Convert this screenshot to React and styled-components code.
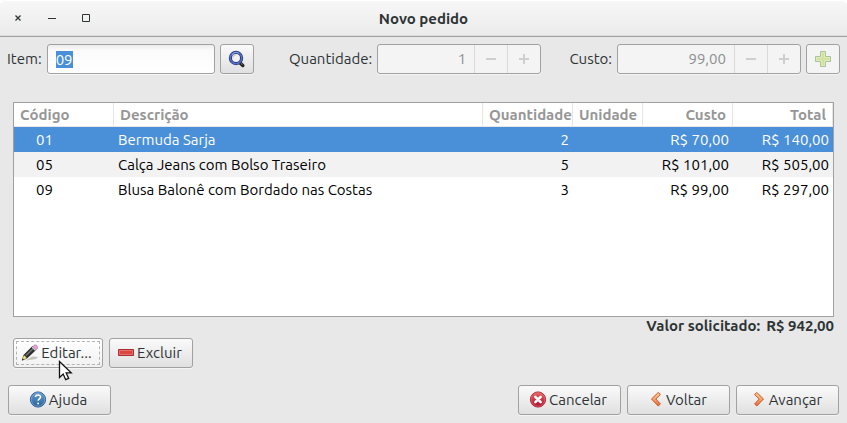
import React, { useEffect, useRef, useState } from "react";
import styled, { createGlobalStyle, css } from "styled-components";

const GlobalStyle = createGlobalStyle`
  * { box-sizing: border-box; }
  body {
    margin: 0;
    background: #fff;
    color: #2e3436;
    font: 15px/20px Ubuntu, "Noto Sans", "Open Sans", sans-serif;
  }
  button, input { font: inherit; color: inherit; }
`;

const Window = styled.main`
  display: flex;
  flex-direction: column;
  min-height: 100vh;
  background: #e8e8e8;
  border-radius: 6px 6px 0 0;
`;

const TitleBar = styled.header`
  display: grid;
  grid-template-columns: 1fr auto 1fr;
  align-items: center;
  height: 37px;
  padding: 0 10px;
  background: linear-gradient(#f7f7f7, #ebebeb);
  border-bottom: 1px solid #a1a1a1;
  box-shadow: inset 0 1px #fff, inset 0 -1px #dcdcdc;
  border-radius: 6px 6px 0 0;
`;

const WindowControls = styled.div`
  display: flex;
  gap: 18px;
`;

const WindowButton = styled.button`
  display: flex;
  width: 16px;
  height: 16px;
  padding: 0;
  border: 0;
  background: none;
`;

const Title = styled.h1`
  margin: 0;
  padding-top: 2px;
  font-size: 15px;
  line-height: 20px;
`;

const EntryBar = styled.form`
  display: flex;
  justify-content: space-between;
  padding: 7px 7px 0;
`;

const Field = styled.div`
  display: flex;
  align-items: center;
  gap: 5px;
  padding-left: ${(p) => (p.$indent ? "7px" : "0")};
`;

const Label = styled.label`
  white-space: nowrap;
`;

const TextInput = styled.input`
  width: 168px;
  height: 30px;
  padding: 0 8px;
  border: 1px solid #a1a1a1;
  border-radius: 3px;
  background: linear-gradient(#ececec, #fafafa 5px, #fff);
  box-shadow: 0 1px #f8f8f8;
  line-height: 17px;
  outline: 0;
  &::selection { background: #4a90d9; color: #fff; }
`;

const buttonFrame = css`
  border: 1px solid #a1a1a1;
  border-radius: 3px;
  box-shadow: 0 1px #f4f4f4;
`;

const Spin = styled.div`
  ${buttonFrame}
  display: flex;
  width: ${(p) => p.$width};
  height: 30px;
  background: #f4f4f4;
  overflow: hidden;
`;

const SpinInput = styled.input`
  flex: 1;
  min-width: 0;
  padding: 0 8px;
  border: 0;
  background: none;
  color: #8c9091;
  text-align: right;
`;

const SpinStep = styled.button`
  display: grid;
  place-items: center;
  width: 33px;
  padding: 0;
  border: 0;
  border-left: 1px solid #dadada;
  background: none;
`;

const Button = styled.button`
  ${buttonFrame}
  display: inline-flex;
  align-items: center;
  justify-content: center;
  width: ${(p) => p.$width};
  height: 30px;
  padding: 0;
  white-space: nowrap;
  background: ${(p) => (p.$hover ? "linear-gradient(#fff, #f1f1f1)" : "linear-gradient(#fafafa, #e0e0e0)")};
  outline: ${(p) => (p.$hover ? "1px dashed #b4b4b4" : "0")};
  outline-offset: -4px;
  &:disabled { background: #f4f4f4; }
  svg { flex: none; }
`;

const LabelledButton = styled(Button)`
  gap: ${(p) => p.$gap || "2px"};
  padding-right: 3px;
`;

const Content = styled.section`
  display: flex;
  flex: 1;
  flex-direction: column;
  padding: 28px 13px 0;
`;

const ListPanel = styled.div`
  flex: 1;
  min-height: 200px;
  background: #fff;
  border: 1px solid #a1a1a1;
`;

const Table = styled.table`
  width: 100%;
  table-layout: fixed;
  border-collapse: separate;
  border-spacing: 0;
`;

const Col = styled.col`
  width: ${(p) => p.$width};
`;

const HeadCell = styled.th`
  height: 24px;
  padding: 0 0 0 6px;
  border-right: 1px solid #e6e6e6;
  border-bottom: 1px solid #e6e6e6;
  color: #969696;
  text-align: left;
  line-height: 20px;
  white-space: nowrap;
  overflow: hidden;
  ${(p) => p.$right && "text-align: right; padding: 0 6px 0 0;"}
`;

const Row = styled.tr`
  background: #fff;
  color: #000;
  &:nth-child(even) { background: #f2f2f2; }
  &[aria-selected="true"] { background: #4a90d9; color: #fff; }
`;

const Cell = styled.td`
  height: 25px;
  padding: 0 4px;
  text-align: ${(p) => p.$align || "left"};
  white-space: nowrap;
`;

const CodeCell = styled(Cell)`
  padding-left: 22px;
`;

const Total = styled.p`
  display: flex;
  justify-content: flex-end;
  gap: 6px;
  margin: 0;
  line-height: 18px;
  font-weight: bold;
`;

const ItemActions = styled.div`
  display: flex;
  gap: 6px;
  margin-top: 3px;
`;

const Pointed = styled.div`
  position: relative;
  display: flex;
`;

const Cursor = styled.svg`
  position: absolute;
  left: 45px;
  top: 22px;
  z-index: 1;
  pointer-events: none;
`;

const Footer = styled.footer`
  display: flex;
  gap: 6px;
  padding: 17px 8px 8px;
`;

const Spacer = styled.span`
  flex: 1;
`;

const SearchIcon = () => (
  <svg width="18" height="18" viewBox="0 0 18 18" aria-hidden="true">
    <path d="M11.5 12.5l3.3 3" stroke="#222" strokeWidth="3.4" strokeLinecap="round" />
    <path d="M13 13.5l1.4 1.2" stroke="#958774" strokeWidth="1" />
    <circle cx="8" cy="8" r="5.6" fill="#f1f2ee" stroke="#28347e" strokeWidth="3.2" />
    <circle cx="8" cy="8" r="5.7" fill="none" stroke="#5773c4" strokeWidth="1.5" />
    <path d="M4 5.2a5 5 0 0 1 6.5-2" fill="none" stroke="#91b9e9" strokeWidth="1" />
    <path d="M5 8a3 3 0 0 1 3-3" fill="none" stroke="#c9cbc9" strokeWidth="1" />
  </svg>
);

const AddIcon = () => (
  <svg width="18" height="18" viewBox="0 0 18 18" aria-hidden="true">
    <path d="M6.5 1.5h5v5h5v5h-5v5h-5v-5h-5v-5h5z" fill="#d2e0a0" stroke="#a9c49b" strokeLinejoin="round" />
    <path d="M7.5 2.5h3v5h5v3h-5v5h-3v-5h-5v-3h5z" fill="none" stroke="#e2ebbc" />
  </svg>
);

const PencilIcon = () => (
  <svg width="18" height="18" viewBox="0 0 18 18" aria-hidden="true">
    <path d="M5 16.5l6-4 6 .5-2 2z" fill="#c2c2c0" />
    <path d="M1.5 16l1-5L11.5 2l3.8 3.8L6 14.5z" fill="#2b2d2d" />
    <path d="M5 11.5L13 3.8" stroke="#777" strokeWidth="1.4" />
    <path d="M1.2 16.2l1.3-4.7c1.6.1 2.8 1.2 3.2 3z" fill="#eee28a" stroke="#6f673c" strokeWidth=".6" />
    <path d="M1 16.4l.5-2 1.5 1.3z" fill="#222" />
    <path d="M11.4 3l3.2 3.2" stroke="#dedede" strokeWidth="1.6" />
    <path d="M12 2.5l1-1.2c2.2-1 4.3 1.1 3.3 3.2l-1.2 1.2z" fill="#eba7df" stroke="#b671a8" strokeWidth=".8" />
  </svg>
);

const RemoveIcon = () => (
  <svg width="18" height="18" viewBox="0 0 18 18" aria-hidden="true">
    <path d="M1.5 5.5h15v6h-15z" fill="#dc4642" stroke="#a92e32" />
    <path d="M2.5 6.5h13v4h-13z" fill="none" stroke="#e4716c" />
  </svg>
);

const HelpIcon = () => (
  <svg width="18" height="18" viewBox="0 0 18 18" aria-hidden="true">
    <defs>
      <linearGradient id="help" x2="0" y2="1">
        <stop stopColor="#6b9fd1" />
        <stop offset="1" stopColor="#245f9c" />
      </linearGradient>
    </defs>
    <circle cx="9" cy="8.5" r="7.6" fill="url(#help)" stroke="#20548c" strokeWidth=".9" />
    <circle cx="9" cy="8.5" r="6.7" fill="none" stroke="#7da9d3" strokeWidth=".7" />
    <path d="M6.5 6C6.7 3.4 11.6 3.5 11.5 6.1c0 1.8-2.4 1.7-2.4 3.7" fill="none" stroke="#fff" strokeWidth="1.5" />
    <circle cx="9.1" cy="12.5" r="1" fill="#fff" />
  </svg>
);

const CancelIcon = () => (
  <svg width="18" height="18" viewBox="0 0 18 18" aria-hidden="true">
    <defs>
      <linearGradient id="cancel" x2="0" y2="1">
        <stop stopColor="#e76660" />
        <stop offset="1" stopColor="#a90e2c" />
      </linearGradient>
    </defs>
    <circle cx="9" cy="8.5" r="7.6" fill="url(#cancel)" stroke="#a81c30" strokeWidth=".9" />
    <circle cx="9" cy="8.5" r="6.7" fill="none" stroke="#e8737a" strokeWidth=".6" />
    <path d="M6.3 5.8l5.4 5.4m0-5.4l-5.4 5.4" stroke="#fff" strokeWidth="2.5" strokeLinecap="round" />
  </svg>
);

const arrows = {
  left: "M11.2 1.5L4.5 8l6.7 7 2.2-2L8.8 8l4.6-4.5z",
  right: "M6.8 1.5L13.5 8l-6.7 7-2.2-2L9.2 8l-4.6-4.5z",
};

const ArrowIcon = ({ direction }) => (
  <svg width="18" height="18" viewBox="0 0 18 18" aria-hidden="true">
    <defs>
      <linearGradient id={`arrow-${direction}`} x2="0" y2="1">
        <stop stopColor="#fad18c" />
        <stop offset=".55" stopColor="#f0a070" />
        <stop offset="1" stopColor="#ee6332" />
      </linearGradient>
    </defs>
    <path d={arrows[direction]} fill={`url(#arrow-${direction})`} stroke="#cf5425" strokeLinejoin="round" />
  </svg>
);

const signs = { minus: "M1 6h10", plus: "M1 6h10M6 1v10" };

const SignIcon = ({ type }) => (
  <svg width="12" height="12" viewBox="0 0 12 12" aria-hidden="true">
    <path d={signs[type]} stroke="#cfcfcf" strokeWidth="2" />
  </svg>
);

const controls = [
  { label: "Fechar", path: "M5.5 5.5l5 5m0-5l-5 5", weight: 1.3 },
  { label: "Minimizar", path: "M4 8.5h8", weight: 1 },
  { label: "Maximizar", path: "M4.5 4.5h7v7h-7z", weight: 1 },
];

const SpinField = ({ id, label, value, width, indent }) => (
  <Field $indent={indent}>
    <Label htmlFor={id}>{label}</Label>
    <Spin $width={width}>
      <SpinInput id={id} value={value} disabled readOnly />
      <SpinStep type="button" disabled aria-label="Diminuir"><SignIcon type="minus" /></SpinStep>
      <SpinStep type="button" disabled aria-label="Aumentar"><SignIcon type="plus" /></SpinStep>
    </Spin>
  </Field>
);

const items = [
  { code: "01", name: "Bermuda Sarja", quantity: 2, cost: "R$ 70,00", total: "R$ 140,00" },
  { code: "05", name: "Calça Jeans com Bolso Traseiro", quantity: 5, cost: "R$ 101,00", total: "R$ 505,00" },
  { code: "09", name: "Blusa Balonê com Bordado nas Costas", quantity: 3, cost: "R$ 99,00", total: "R$ 297,00" },
];

export default function App() {
  const itemInput = useRef(null);
  const [item, setItem] = useState("09");
  const [selected, setSelected] = useState("01");

  useEffect(() => {
    itemInput.current.focus();
    itemInput.current.select();
  }, []);

  return (
    <Window>
      <GlobalStyle />
      <TitleBar>
        <WindowControls>
          {controls.map((control) => (
            <WindowButton key={control.label} aria-label={control.label}>
              <svg width="16" height="16" viewBox="0 0 16 16" aria-hidden="true">
                <path d={control.path} fill="none" stroke="#2e3436" strokeWidth={control.weight} />
              </svg>
            </WindowButton>
          ))}
        </WindowControls>
        <Title>Novo pedido</Title>
      </TitleBar>
      <EntryBar onSubmit={(event) => event.preventDefault()}>
        <Field>
          <Label htmlFor="item">Item:</Label>
          <TextInput id="item" ref={itemInput} value={item} onChange={(event) => setItem(event.target.value)} />
          <Button type="button" $width="34px" aria-label="Pesquisar"><SearchIcon /></Button>
        </Field>
        <SpinField id="quantity" label="Quantidade:" value="1" width="164px" indent />
        <Field>
          <SpinField id="cost" label="Custo:" value="99,00" width="184px" />
          <Button type="button" $width="34px" disabled aria-label="Adicionar"><AddIcon /></Button>
        </Field>
      </EntryBar>
      <Content>
        <ListPanel>
          <Table>
            <colgroup>
              <Col $width="100px" />
              <Col />
              <Col $width="90px" />
              <Col $width="70px" />
              <Col $width="90px" />
              <Col $width="100px" />
            </colgroup>
            <thead>
              <tr>
                <HeadCell>Código</HeadCell>
                <HeadCell>Descrição</HeadCell>
                <HeadCell>Quantidade</HeadCell>
                <HeadCell>Unidade</HeadCell>
                <HeadCell $right>Custo</HeadCell>
                <HeadCell $right>Total</HeadCell>
              </tr>
            </thead>
            <tbody>
              {items.map((row) => (
                <Row key={row.code} aria-selected={row.code === selected} onClick={() => setSelected(row.code)}>
                  <CodeCell>{row.code}</CodeCell>
                  <Cell>{row.name}</Cell>
                  <Cell $align="right">{row.quantity}</Cell>
                  <Cell />
                  <Cell $align="right">{row.cost}</Cell>
                  <Cell $align="right">{row.total}</Cell>
                </Row>
              ))}
            </tbody>
          </Table>
        </ListPanel>
        <Total><span>Valor solicitado:</span><span>R$ 942,00</span></Total>
        <ItemActions>
          <Pointed>
            <LabelledButton $width="90px" $hover><PencilIcon />Editar...</LabelledButton>
            <Cursor width="16" height="22" viewBox="0 0 16 22" aria-hidden="true">
              <path d="M1.5 1.5v16l3.7-3.4 2.5 5.6 3-1.3-2.5-5.5h5z" fill="#fff" stroke="#111" strokeWidth="1.3" />
            </Cursor>
          </Pointed>
          <LabelledButton $width="84px"><RemoveIcon />Excluir</LabelledButton>
        </ItemActions>
      </Content>
      <Footer>
        <LabelledButton $width="103px"><HelpIcon />Ajuda</LabelledButton>
        <Spacer />
        <LabelledButton $width="103px"><CancelIcon />Cancelar</LabelledButton>
        <LabelledButton $width="103px" $gap="1px"><ArrowIcon direction="left" />Voltar</LabelledButton>
        <LabelledButton $width="103px" $gap="1px"><ArrowIcon direction="right" />Avançar</LabelledButton>
      </Footer>
    </Window>
  );
}
